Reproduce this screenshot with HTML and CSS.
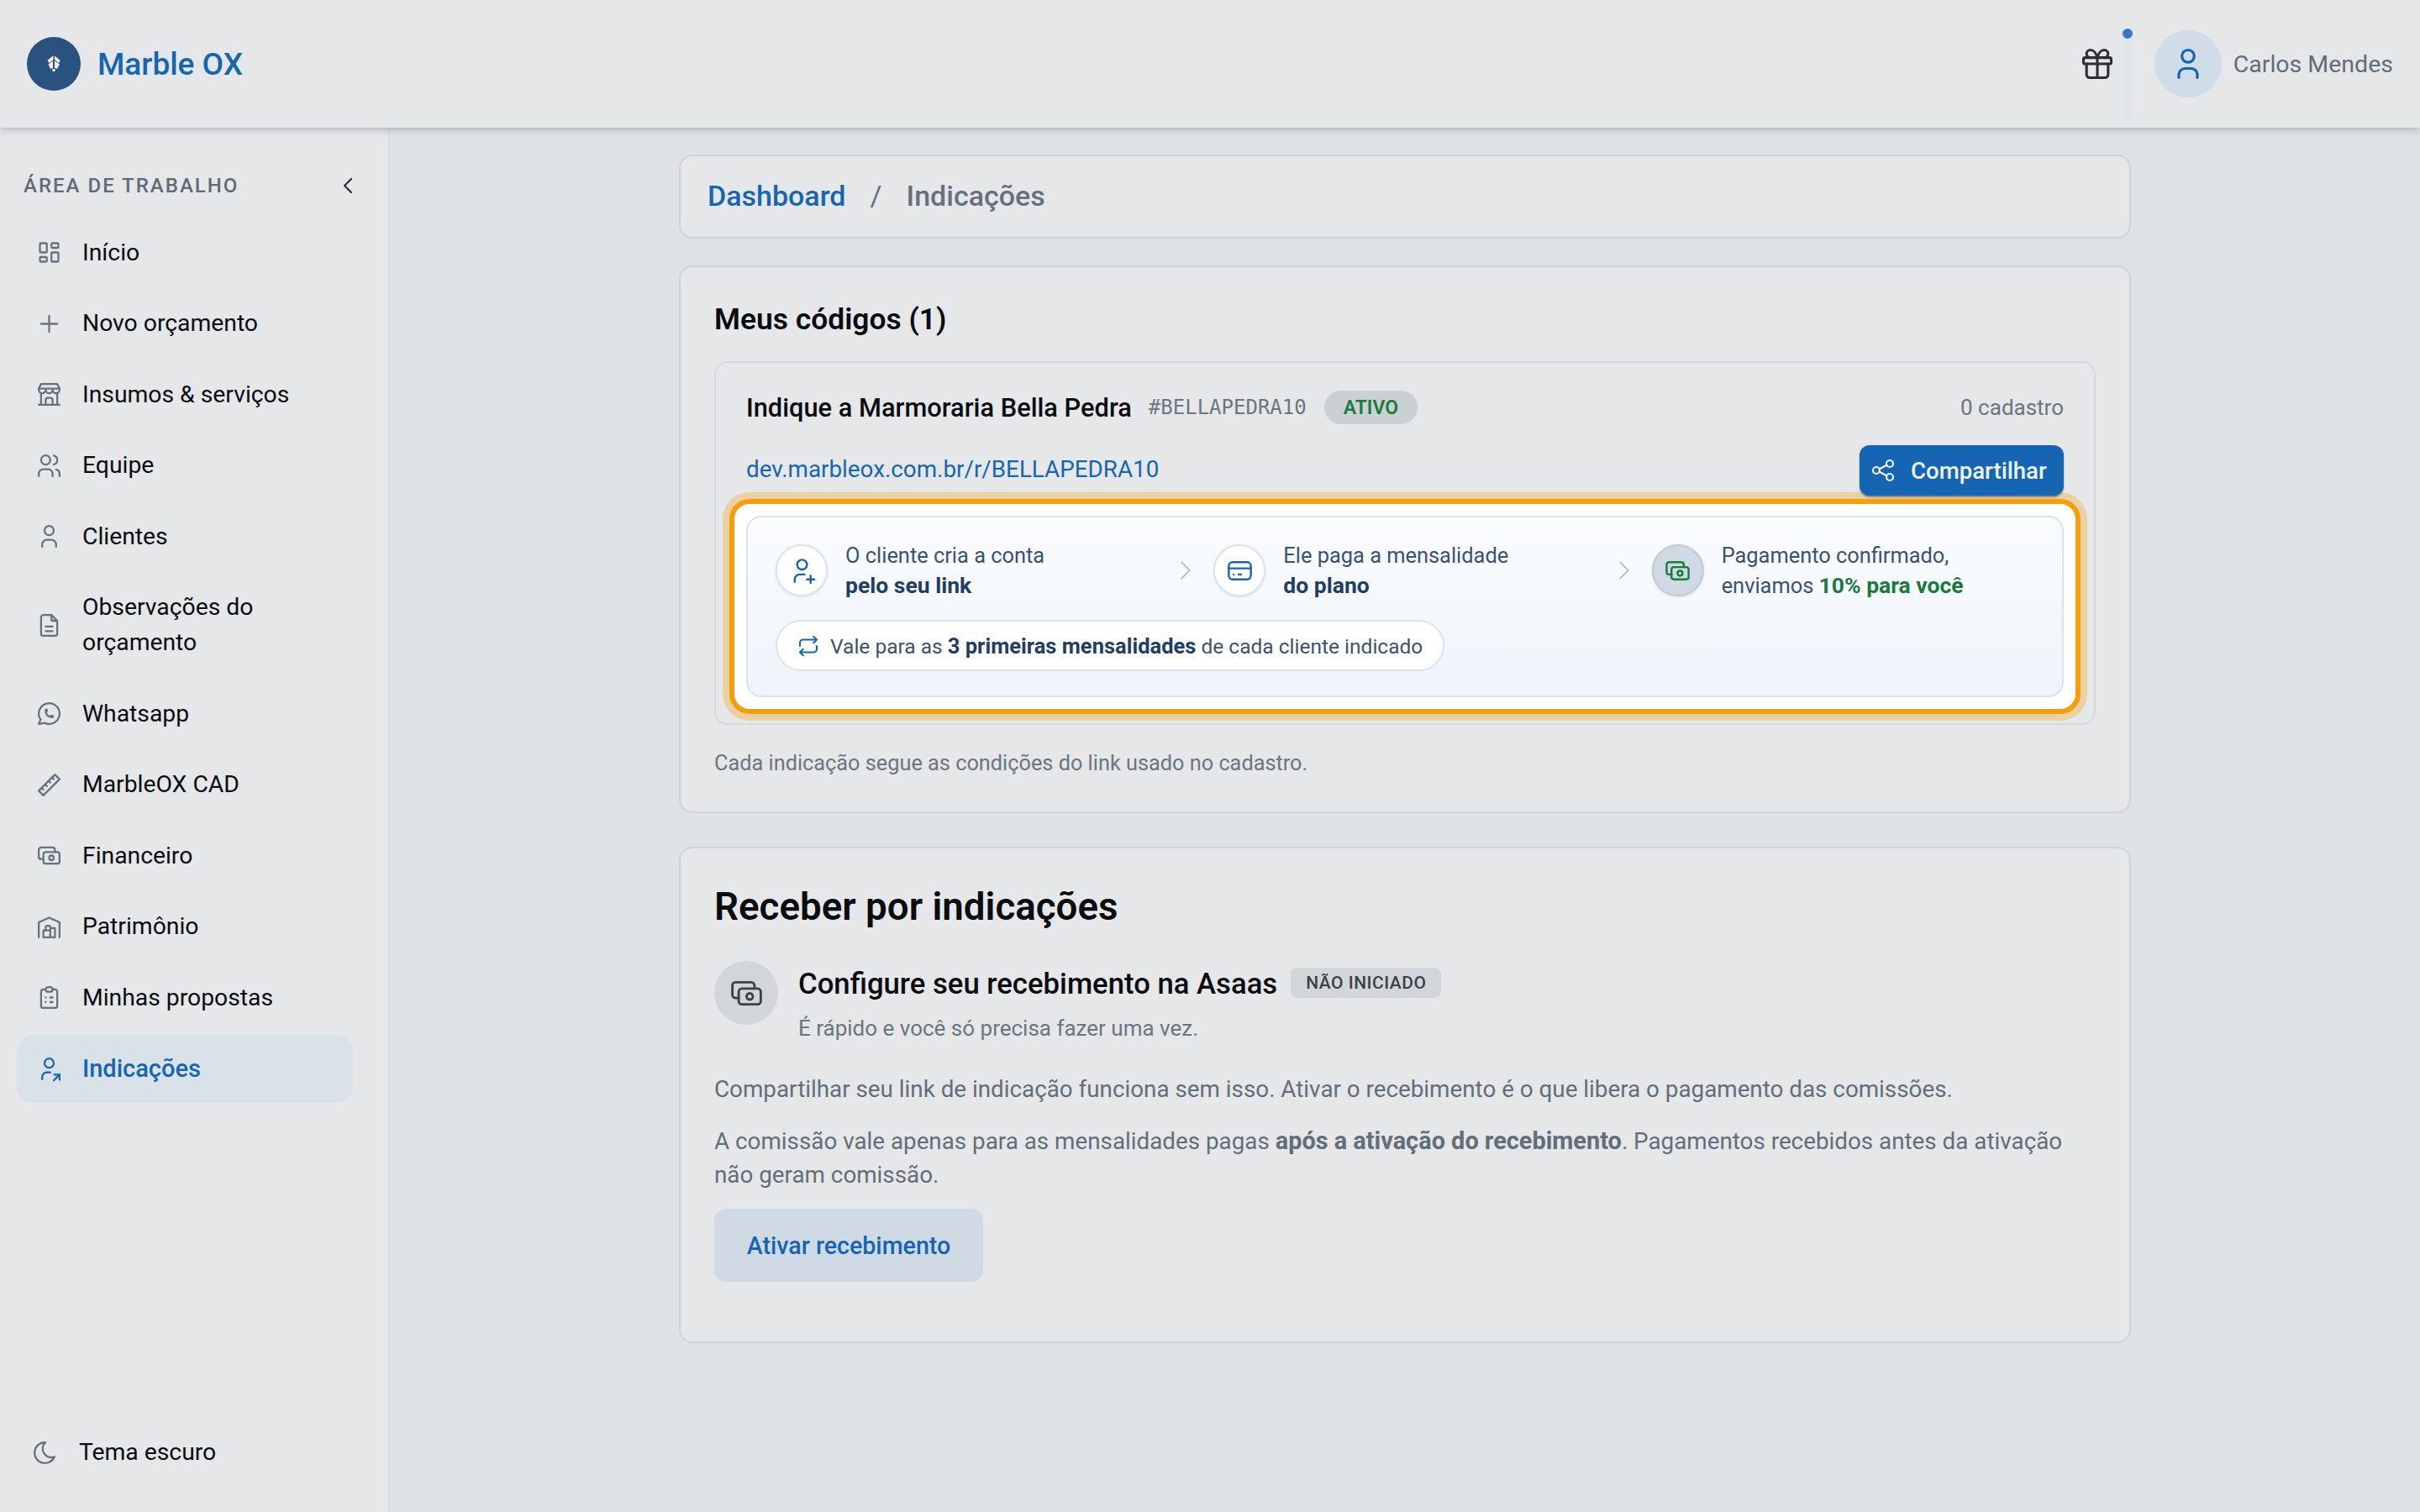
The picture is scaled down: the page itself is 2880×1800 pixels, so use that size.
FILE: index.html
```html
<!DOCTYPE html>
<html lang="pt-BR">
<head>
    <meta charset="UTF-8">
    <title>Marble OX - Indicações</title>
    <link rel="stylesheet" href="styles.css">
</head>
<body>

    <svg class="sprite" xmlns="http://www.w3.org/2000/svg">
        <symbol id="i-dashboard" viewBox="0 0 24 24"><path d="M5 4h4a1 1 0 0 1 1 1v6a1 1 0 0 1 -1 1h-4a1 1 0 0 1 -1 -1v-6a1 1 0 0 1 1 -1"/><path d="M5 16h4a1 1 0 0 1 1 1v2a1 1 0 0 1 -1 1h-4a1 1 0 0 1 -1 -1v-2a1 1 0 0 1 1 -1"/><path d="M15 12h4a1 1 0 0 1 1 1v6a1 1 0 0 1 -1 1h-4a1 1 0 0 1 -1 -1v-6a1 1 0 0 1 1 -1"/><path d="M15 4h4a1 1 0 0 1 1 1v2a1 1 0 0 1 -1 1h-4a1 1 0 0 1 -1 -1v-2a1 1 0 0 1 1 -1"/></symbol>
        <symbol id="i-plus" viewBox="0 0 24 24"><path d="M12 5v14"/><path d="M5 12h14"/></symbol>
        <symbol id="i-store" viewBox="0 0 24 24"><path d="M3 21h18"/><path d="M3 7v1a3 3 0 0 0 6 0v-1m0 1a3 3 0 0 0 6 0v-1m0 1a3 3 0 0 0 6 0v-1h-18l2 -4h14l2 4"/><path d="M5 21v-10.15"/><path d="M19 21v-10.15"/><path d="M9 21v-4a2 2 0 0 1 2 -2h2a2 2 0 0 1 2 2v4"/></symbol>
        <symbol id="i-users" viewBox="0 0 24 24"><path d="M5 7a4 4 0 1 0 8 0a4 4 0 0 0 -8 0"/><path d="M3 21v-2a4 4 0 0 1 4 -4h4a4 4 0 0 1 4 4v2"/><path d="M16 3.13a4 4 0 0 1 0 7.75"/><path d="M21 21v-2a4 4 0 0 0 -3 -3.85"/></symbol>
        <symbol id="i-user" viewBox="0 0 24 24"><path d="M8 7a4 4 0 1 0 8 0a4 4 0 0 0 -8 0"/><path d="M6 21v-2a4 4 0 0 1 4 -4h4a4 4 0 0 1 4 4v2"/></symbol>
        <symbol id="i-file" viewBox="0 0 24 24"><path d="M14 3v4a1 1 0 0 0 1 1h4"/><path d="M17 21h-10a2 2 0 0 1 -2 -2v-14a2 2 0 0 1 2 -2h7l5 5v11a2 2 0 0 1 -2 2"/><path d="M9 17h6"/><path d="M9 13h6"/></symbol>
        <symbol id="i-whatsapp" viewBox="0 0 24 24"><path d="M3 21l1.65 -3.8a9 9 0 1 1 3.4 2.9l-5.05 .9"/><path d="M9 10a.5 .5 0 0 0 1 0v-1a.5 .5 0 0 0 -1 0v1a5 5 0 0 0 5 5h1a.5 .5 0 0 0 0 -1h-1a.5 .5 0 0 0 0 1"/></symbol>
        <symbol id="i-ruler" viewBox="0 0 24 24"><path d="M17 3l4 4l-14 14l-4 -4z"/><path d="M16 7l-1.500 -1.500"/><path d="M13 10l-1.500 -1.500"/><path d="M10 13l-1.500 -1.500"/><path d="M7 16l-1.500 -1.500"/></symbol>
        <symbol id="i-cash" viewBox="0 0 24 24"><path d="M7 11a2 2 0 0 1 2 -2h10a2 2 0 0 1 2 2v6a2 2 0 0 1 -2 2h-10a2 2 0 0 1 -2 -2z"/><path d="M12 14a2 2 0 1 0 4 0a2 2 0 1 0 -4 0"/><path d="M17 9v-2a2 2 0 0 0 -2 -2h-10a2 2 0 0 0 -2 2v6a2 2 0 0 0 2 2h2"/></symbol>
        <symbol id="i-warehouse" viewBox="0 0 24 24"><path d="M3 21v-13l9 -4l9 4v13"/><path d="M13 13h4v8h-10v-6h6"/><path d="M13 21v-9a1 1 0 0 0 -1 -1h-2a1 1 0 0 0 -1 1v3"/></symbol>
        <symbol id="i-clipboard" viewBox="0 0 24 24"><path d="M9 5h-2a2 2 0 0 0 -2 2v12a2 2 0 0 0 2 2h10a2 2 0 0 0 2 -2v-12a2 2 0 0 0 -2 -2h-2"/><path d="M9 5a2 2 0 0 1 2 -2h2a2 2 0 0 1 2 2a2 2 0 0 1 -2 2h-2a2 2 0 0 1 -2 -2"/><path d="M9 12h.01"/><path d="M13 12h2"/><path d="M9 16h.01"/><path d="M13 16h2"/></symbol>
        <symbol id="i-user-share" viewBox="0 0 24 24"><path d="M8 7a4 4 0 1 0 8 0a4 4 0 0 0 -8 0"/><path d="M6 21v-2a4 4 0 0 1 4 -4h3"/><path d="M16 22l5 -5"/><path d="M21 21.500v-4.500h-4.500"/></symbol>
        <symbol id="i-user-plus" viewBox="0 0 24 24"><path d="M8 7a4 4 0 1 0 8 0a4 4 0 0 0 -8 0"/><path d="M16 19h6"/><path d="M19 16v6"/><path d="M6 21v-2a4 4 0 0 1 4 -4h4"/></symbol>
        <symbol id="i-card" viewBox="0 0 24 24"><path d="M3 8a3 3 0 0 1 3 -3h12a3 3 0 0 1 3 3v8a3 3 0 0 1 -3 3h-12a3 3 0 0 1 -3 -3z"/><path d="M3 10h18"/><path d="M7 15h.01"/><path d="M11 15h2"/></symbol>
        <symbol id="i-repeat" viewBox="0 0 24 24"><path d="M4 12v-3a3 3 0 0 1 3 -3h13m-3 -3l3 3l-3 3"/><path d="M20 12v3a3 3 0 0 1 -3 3h-13m3 3l-3 -3l3 -3"/></symbol>
        <symbol id="i-share" viewBox="0 0 24 24"><path d="M3 12a3 3 0 1 0 6 0a3 3 0 1 0 -6 0"/><path d="M15 6a3 3 0 1 0 6 0a3 3 0 1 0 -6 0"/><path d="M15 18a3 3 0 1 0 6 0a3 3 0 1 0 -6 0"/><path d="M8.700 10.700l6.600 -3.400"/><path d="M8.700 13.300l6.600 3.400"/></symbol>
        <symbol id="i-gift" viewBox="0 0 24 24"><path d="M3 9a1 1 0 0 1 1 -1h16a1 1 0 0 1 1 1v2a1 1 0 0 1 -1 1h-16a1 1 0 0 1 -1 -1z"/><path d="M12 8v13"/><path d="M19 12v7a2 2 0 0 1 -2 2h-10a2 2 0 0 1 -2 -2v-7"/><path d="M7.500 8a2.500 2.500 0 0 1 0 -5a4.800 8 0 0 1 4.500 5a4.800 8 0 0 1 4.500 -5a2.500 2.500 0 0 1 0 5"/></symbol>
        <symbol id="i-moon" viewBox="0 0 24 24"><path d="M12 3c.132 0 .263 0 .393 0a7.500 7.500 0 0 0 7.920 12.446a9 9 0 1 1 -8.313 -12.454z"/></symbol>
        <symbol id="i-chevron-left" viewBox="0 0 24 24"><path d="M15 6l-6 6l6 6"/></symbol>
        <symbol id="i-chevron-right" viewBox="0 0 24 24"><path d="M9 6l6 6l-6 6"/></symbol>
    </svg>

    <header class="topbar">
        <div class="brand">
            <span class="brand-logo">
                <svg class="logo-mark" viewBox="0 0 40 40" width="40" height="40"><path d="M19.500 10l-7 5.800 2 3.200 5-4z"/><path d="M21 10.500l6.800 5.500-2 3-4.800-4z"/><path d="M13.500 20.500l5.500-4v8.500l-3 1z"/><path d="M27 20.500l-6-4v8.500l3 1z"/><circle cx="20" cy="27.500" r="1.800"/></svg>
            </span>
            <span class="brand-name">Marble OX</span>
        </div>
        <div class="topbar-right">
            <button class="gift-btn"><svg class="icon gift-icon"><use href="#i-gift"/></svg></button>
            <span class="gift-dot"></span>
            <div class="user-box">
                <span class="avatar"><svg class="icon avatar-icon"><use href="#i-user"/></svg></span>
                <span class="user-name">Carlos Mendes</span>
            </div>
        </div>
    </header>

    <div class="layout">
        <!-- Menu lateral -->
        <aside class="sidebar">
            <div class="sidebar-title">
                <span>ÁREA DE TRABALHO</span>
                <svg class="icon collapse-icon"><use href="#i-chevron-left"/></svg>
            </div>
            <nav class="menu">
                <a class="menu-item"><svg class="icon"><use href="#i-dashboard"/></svg><span>Início</span></a>
                <a class="menu-item"><svg class="icon"><use href="#i-plus"/></svg><span>Novo orçamento</span></a>
                <a class="menu-item"><svg class="icon"><use href="#i-store"/></svg><span>Insumos &amp; serviços</span></a>
                <a class="menu-item"><svg class="icon"><use href="#i-users"/></svg><span>Equipe</span></a>
                <a class="menu-item"><svg class="icon"><use href="#i-user"/></svg><span>Clientes</span></a>
                <a class="menu-item"><svg class="icon"><use href="#i-file"/></svg><span>Observações do orçamento</span></a>
                <a class="menu-item"><svg class="icon"><use href="#i-whatsapp"/></svg><span>Whatsapp</span></a>
                <a class="menu-item"><svg class="icon"><use href="#i-ruler"/></svg><span>MarbleOX CAD</span></a>
                <a class="menu-item"><svg class="icon"><use href="#i-cash"/></svg><span>Financeiro</span></a>
                <a class="menu-item"><svg class="icon"><use href="#i-warehouse"/></svg><span>Patrimônio</span></a>
                <a class="menu-item"><svg class="icon"><use href="#i-clipboard"/></svg><span>Minhas propostas</span></a>
                <a class="menu-item active"><svg class="icon"><use href="#i-user-share"/></svg><span>Indicações</span></a>
            </nav>
            <div class="theme-toggle"><svg class="icon"><use href="#i-moon"/></svg><span>Tema escuro</span></div>
        </aside>

        <main class="content">
            <div class="card breadcrumb">
                <a class="crumb-link">Dashboard</a>
                <span class="crumb-sep">/</span>
                <span class="crumb-current">Indicações</span>
            </div>

            <section class="card codes-card">
                <h2 class="codes-title">Meus códigos (1)</h2>
                <div class="code-box">
                    <div class="code-head">
                        <strong class="code-name">Indique a Marmoraria Bella Pedra</strong>
                        <span class="code-tag">#BELLAPEDRA10</span>
                        <span class="badge-active">ATIVO</span>
                        <span class="code-count">0 cadastro</span>
                    </div>
                    <div class="code-link-row">
                        <a class="code-link">dev.marbleox.com.br/r/BELLAPEDRA10</a>
                        <button class="share-btn"><svg class="icon"><use href="#i-share"/></svg>Compartilhar</button>
                    </div>
                    <!-- Destaque do tour -->
                    <div class="spotlight">
                        <div class="steps-panel">
                            <div class="steps">
                                <div class="step">
                                    <span class="step-icon"><svg class="icon"><use href="#i-user-plus"/></svg></span>
                                    <p>O cliente cria a conta<br><b>pelo seu link</b></p>
                                </div>
                                <span class="step-arrow"><svg class="icon"><use href="#i-chevron-right"/></svg></span>
                                <div class="step">
                                    <span class="step-icon"><svg class="icon"><use href="#i-card"/></svg></span>
                                    <p>Ele paga a mensalidade<br><b>do plano</b></p>
                                </div>
                                <span class="step-arrow"><svg class="icon"><use href="#i-chevron-right"/></svg></span>
                                <div class="step">
                                    <span class="step-icon step-icon-green"><svg class="icon"><use href="#i-cash"/></svg></span>
                                    <p>Pagamento confirmado,<br>enviamos <b class="green">10% para você</b></p>
                                </div>
                            </div>
                            <div class="rule-pill">
                                <svg class="icon"><use href="#i-repeat"/></svg>
                                <span>Vale para as <b>3 primeiras mensalidades</b> de cada cliente indicado</span>
                            </div>
                        </div>
                    </div>
                </div>
                <p class="codes-note">Cada indicação segue as condições do link usado no cadastro.</p>
            </section>

            <section class="card receive-card">
                <h2 class="receive-title">Receber por indicações</h2>
                <div class="receive-head">
                    <span class="receive-icon"><svg class="icon"><use href="#i-cash"/></svg></span>
                    <div>
                        <div class="receive-name-row">
                            <h3>Configure seu recebimento na Asaas</h3>
                            <span class="badge-pending">NÃO INICIADO</span>
                        </div>
                        <p class="receive-sub">É rápido e você só precisa fazer uma vez.</p>
                    </div>
                </div>
                <p class="receive-text first">Compartilhar seu link de indicação funciona sem isso. Ativar o recebimento é o que libera o pagamento das comissões.</p>
                <p class="receive-text">A comissão vale apenas para as mensalidades pagas <b>após a ativação do recebimento</b>. Pagamentos recebidos antes da ativação não geram comissão.</p>
                <button class="activate-btn">Ativar recebimento</button>
            </section>
        </main>
    </div>

</body>
</html>
```

FILE: styles.css
```css
/* Basis */
* {
    box-sizing: border-box;
}

html, body {
    margin: 0;
    height: 1800px;
    overflow: hidden;
}

body {
    font-family: Roboto, "Liberation Sans", sans-serif;
    color: #0a0d10;
    background-color: #dfe3e7;
    display: flex;
    flex-direction: column;
}

p, h2, h3 {
    margin: 0;
}

button {
    font-family: inherit;
    border: 0;
}

.sprite {
    display: none;
}

.icon {
    width: 33px;
    height: 33px;
    flex-shrink: 0;
    fill: none;
    stroke: currentColor;
    stroke-width: 1.65;
    stroke-linecap: round;
    stroke-linejoin: round;
}

/* Topbar */
.topbar {
    position: relative;
    z-index: 2;
    height: 152px;
    flex-shrink: 0;
    display: flex;
    align-items: center;
    justify-content: space-between;
    padding: 0 32px 0 32px;
    background-color: #e5e7e9;
    box-shadow: 0 2px 9px rgba(60, 64, 70, 0.32);
}

.brand {
    display: flex;
    align-items: center;
    gap: 20px;
}

.brand-logo {
    width: 64px;
    height: 64px;
    border-radius: 50%;
    background-color: #29527f;
    display: flex;
    align-items: center;
    justify-content: center;
}

.logo-mark {
    fill: #eef1f4;
}

.brand-name {
    font-size: 37px;
    font-weight: 500;
    color: #1565b3;
}

.topbar-right {
    position: relative;
    display: flex;
    align-items: center;
}

.gift-btn {
    padding: 0;
    display: flex;
    background: none;
    color: #2c3036;
}

.gift-icon {
    width: 44px;
    height: 44px;
    stroke-width: 1.7;
}

.gift-dot {
    position: absolute;
    left: 52px;
    top: -2px;
    width: 12px;
    height: 12px;
    border-radius: 50%;
    background-color: #3b78c4;
}

.gift-dot::after {
    content: "";
    position: absolute;
    left: 1px;
    top: 12px;
    width: 10px;
    height: 96px;
    background-color: #e2e5e7;
}

.user-box {
    display: flex;
    align-items: center;
    gap: 14px;
    margin-left: 46px;
}

.avatar {
    width: 80px;
    height: 80px;
    border-radius: 50%;
    background-color: #d0dce7;
    display: flex;
    align-items: center;
    justify-content: center;
    color: #1565b3;
}

.avatar-icon {
    width: 44px;
    height: 44px;
    stroke-width: 1.75;
}

.user-name {
    font-size: 28.5px;
    color: #616d78;
}

/* Sidebar */
.layout {
    flex: 1;
    display: flex;
    min-height: 0;
}

.sidebar {
    width: 464px;
    flex-shrink: 0;
    display: flex;
    flex-direction: column;
    padding: 52px 42px 0 20px;
    background-color: #e5e7e9;
    border-right: 2px solid #d3dde6;
}

.sidebar-title {
    display: flex;
    align-items: center;
    justify-content: space-between;
    height: 34px;
    padding: 0 0 0 8px;
    margin-right: -10px;
    font-size: 24px;
    font-weight: 500;
    letter-spacing: 2px;
    color: #5f6b76;
}

.collapse-icon {
    width: 32px;
    height: 32px;
    color: #2c3036;
}

.menu {
    display: flex;
    flex-direction: column;
    gap: 4px;
    margin-top: 22.5px;
}

.menu-item {
    display: flex;
    align-items: center;
    gap: 23px;
    padding: 19.25px 20px 19.25px 22px;
    font-size: 28.3px;
    line-height: 42px;
    border-radius: 20px;
}

.menu-item .icon {
    color: #67727d;
}

.menu-item.active {
    background-color: #d9e2e9;
    color: #1565b3;
    font-size: 29px;
    font-weight: 500;
}

.menu-item.active .icon {
    color: #1565b3;
}

.theme-toggle {
    margin-top: auto;
    margin-bottom: 50px;
    margin-left: 17px;
    display: flex;
    align-items: center;
    gap: 24px;
    font-size: 28.3px;
    line-height: 42px;
}

.theme-toggle .icon {
    color: #67727d;
}

/* Inhalt */
.content {
    flex: 1;
    min-width: 0;
    padding-top: 32px;
}

.card {
    width: 1728px;
    margin: 0 auto;
    background-color: #e5e7e9;
    border: 2px solid #cfd4d8;
    border-radius: 16px;
}

.breadcrumb {
    height: 100px;
    display: flex;
    align-items: center;
    padding: 0 32px 2px;
    font-size: 34px;
    font-weight: 500;
}

.crumb-link {
    color: #1565b3;
}

.crumb-sep {
    margin: 0 29px;
    font-weight: 400;
    color: #65717c;
}

.crumb-current {
    color: #65717c;
}

.codes-card {
    margin-top: 32px;
    height: 652px;
    padding: 42px 40px 0;
}

.codes-title {
    font-size: 35.4px;
    line-height: 40px;
    font-weight: 600;
}

.code-box {
    margin-top: 30px;
    height: 433px;
    padding: 0 36px;
    border: 2px solid #d5d9dc;
    border-radius: 16px;
}

.code-head {
    display: flex;
    align-items: center;
    height: 40px;
    margin-top: 33px;
}

.code-name {
    font-size: 30.8px;
    font-weight: 500;
}

.code-tag {
    margin-left: 20px;
    font-family: "DejaVu Sans Mono", monospace;
    font-size: 24px;
    color: #6b7680;
}

.badge-active {
    margin-left: 21px;
    height: 40px;
    padding: 0 23px;
    display: flex;
    align-items: center;
    border-radius: 20px;
    background-color: #cbd0d3;
    color: #1b7a3a;
    font-size: 23px;
    font-weight: 600;
}

.code-count {
    margin-left: auto;
    font-size: 26px;
    color: #6b7680;
}

.code-link-row {
    display: flex;
    align-items: center;
    justify-content: space-between;
    margin-top: 25px;
    height: 60px;
}

.code-link {
    margin-bottom: 4px;
    font-size: 27.8px;
    color: #1565b3;
}

.share-btn {
    height: 60px;
    width: 243px;
    display: flex;
    align-items: center;
    gap: 17px;
    padding: 0 0 0 12px;
    border-radius: 12px;
    background-color: #1565b3;
    color: #eef3f8;
    font-size: 27.6px;
    font-weight: 500;
    box-shadow: 0 2px 2px rgba(50, 60, 70, 0.5);
}

.share-btn .icon {
    width: 32px;
    height: 32px;
}

/* Hervorgehobener Bereich */
.spotlight {
    margin: 4px -20px 0;
    padding: 14px;
    border: 6px solid #f59e0b;
    border-radius: 24px;
    background-color: #fff;
    box-shadow: 0 0 0 8px #e9d1a3;
}

.steps-panel {
    height: 216px;
    padding: 27px 33px 0;
    border: 2px solid #dae3ec;
    border-radius: 18px;
    background: linear-gradient(180deg, #fafcfe, #eff4fb);
}

.steps {
    display: flex;
    align-items: center;
}

.step {
    flex: 1;
    min-width: 0;
    display: flex;
    align-items: center;
    gap: 21px;
    font-size: 25.4px;
    line-height: 36px;
    color: #3a5272;
}

.step b {
    font-size: 26.5px;
    font-weight: 700;
    color: #1f3e66;
}

.step b.green {
    color: #1b7a3a;
}

.step-icon {
    width: 62px;
    height: 62px;
    flex-shrink: 0;
    border-radius: 50%;
    background-color: #fff;
    border: 2px solid #dbe3ec;
    display: flex;
    align-items: center;
    justify-content: center;
    color: #1565b3;
    box-shadow: 0 1px 3px rgba(60, 80, 110, 0.15);
}

.step-icon .icon {
    width: 35px;
    height: 35px;
}

.step-icon-green {
    background-color: #d0dae4;
    border-color: #c2cad2;
    color: #1b7a3a;
}

.step-arrow {
    width: 66px;
    flex-shrink: 0;
    display: flex;
    justify-content: center;
    color: #b8c1c9;
}

.step-arrow .icon {
    width: 38px;
    height: 38px;
    stroke-width: 1.25;
}

.rule-pill {
    display: inline-flex;
    align-items: center;
    gap: 11px;
    height: 61px;
    margin-top: 23px;
    padding: 0 24px 0 22px;
    border: 2px solid #dce3ea;
    border-radius: 31px;
    background-color: #fff;
    font-size: 24.5px;
    color: #3a5272;
}

.rule-pill .icon {
    width: 30px;
    height: 30px;
    color: #1565b3;
}

.rule-pill b {
    font-size: 25.5px;
    font-weight: 700;
    color: #1f3e66;
}

.codes-note {
    margin-top: 28px;
    font-size: 25.3px;
    line-height: 36px;
    color: #6b7680;
}

/* Recebimento */
.receive-card {
    margin-top: 40px;
    height: 591px;
    padding: 41px 40px 0;
}

.receive-title {
    font-size: 45.7px;
    line-height: 58px;
    font-weight: 600;
}

.receive-head {
    display: flex;
    gap: 24px;
    margin-top: 35px;
}

.receive-icon {
    width: 76px;
    height: 76px;
    flex-shrink: 0;
    border-radius: 50%;
    background-color: #d2d6d9;
    display: flex;
    align-items: center;
    justify-content: center;
    color: #3c4148;
}

.receive-icon .icon {
    width: 45px;
    height: 45px;
    stroke-width: 1.5;
}

.receive-name-row {
    display: flex;
    align-items: center;
    gap: 16px;
    height: 50px;
    margin-top: 2px;
}

.receive-name-row h3 {
    font-size: 34.7px;
    font-weight: 500;
}

.badge-pending {
    height: 36px;
    margin-bottom: 2px;
    padding: 0 18px;
    display: flex;
    align-items: center;
    border-radius: 8px;
    background-color: #d2d6d9;
    font-size: 21px;
    font-weight: 500;
    letter-spacing: 0.5px;
    color: #3c4148;
}

.receive-sub {
    margin-top: 10px;
    font-size: 26px;
    line-height: 36px;
    color: #6b7680;
}

.receive-text {
    margin-top: 21px;
    font-size: 27.8px;
    line-height: 40px;
    color: #626e79;
}

.receive-text.first {
    margin-top: 35px;
}

.receive-text b {
    font-size: 28.9px;
    font-weight: 700;
}

.activate-btn {
    display: block;
    margin-top: 20px;
    width: 320px;
    height: 87px;
    border-radius: 14px;
    background-color: #cfdae5;
    color: #1565b3;
    font-size: 28.6px;
    font-weight: 500;
}
```
